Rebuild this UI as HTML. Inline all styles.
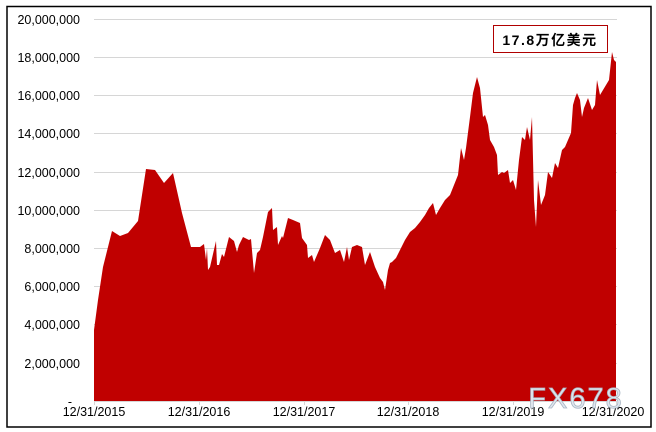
<!DOCTYPE html>
<html><head><meta charset="utf-8"><style>
html,body{margin:0;padding:0;background:#fff;}
body{width:656px;height:432px;position:relative;overflow:hidden;font-family:"Liberation Sans",Arial,sans-serif;}
</style></head><body>
<svg width="656" height="432" viewBox="0 0 656 432" xmlns="http://www.w3.org/2000/svg" style="position:absolute;left:0;top:0">
<rect x="7" y="6.5" width="644" height="420.5" fill="#fff" stroke="#000" stroke-width="1.5"/>
<g stroke="#d6d6d6" stroke-width="1">
<line x1="94" x2="617" y1="19.5" y2="19.5"/><line x1="94" x2="617" y1="57.5" y2="57.5"/>
<line x1="94" x2="617" y1="95.5" y2="95.5"/><line x1="94" x2="617" y1="133.5" y2="133.5"/>
<line x1="94" x2="617" y1="172.5" y2="172.5"/><line x1="94" x2="617" y1="210.5" y2="210.5"/>
<line x1="94" x2="617" y1="248.5" y2="248.5"/><line x1="94" x2="617" y1="286.5" y2="286.5"/>
<line x1="94" x2="617" y1="324.5" y2="324.5"/><line x1="94" x2="617" y1="363.5" y2="363.5"/>
<line x1="94" x2="617" y1="401.5" y2="401.5"/>
<line x1="94.5" x2="94.5" y1="401" y2="405"/><line x1="199.5" x2="199.5" y1="401" y2="405"/>
<line x1="304.5" x2="304.5" y1="401" y2="405"/><line x1="408.5" x2="408.5" y1="401" y2="405"/>
<line x1="513.5" x2="513.5" y1="401" y2="405"/><line x1="616.5" x2="616.5" y1="401" y2="405"/>
</g>
<path fill="#c00000" d="M94,401 L94,330 L98,300 103,267 112,231 120,236 128,233 138,221 146,169 155,170 164,183 173,173 182,213 191,247 200,247 204,244 206,260 207,248 208,270 210,267 216,241 217,265 219,265 222,254 224,257 229,237 234,241 237,252 239,245 243,237 249,240 251,239 254,273 257,253 260,250 263,237 268,212 272,208 273,230 277,227 278,245 282,236 283,238 288,218 293,220 300,223 302,238 307,245 308,258 312,255 314,262 320,248 325,235 330,240 335,253 340,250 344,262 347,247 349,260 352,247 357,245 362,247 365,265 370,252 375,267 380,278 383,282 385,290 388,270 390,263 392,262 396,258 400,250 405,240 410,232 415,228 420,222 425,215 429,208 433,203 436,215 440,208 445,200 450,195 454,185 458,175 461,148 464,160 466,148 470,117 473,93 477,77 480,88 483,117 485,115 488,125 490,140 494,147 497,155 498,175 502,172 504,173 508,170 510,183 513,180 516,190 519,160 522,137 525,140 527,127 530,140 532,117 534,200 536,227 538,180 541,205 545,195 548,172 552,178 555,163 558,168 562,150 565,147 568,140 571,133 573,105 575,98 577,93 580,100 582,117 584,108 588,98 592,110 595,105 597,80 600,95 603,90 606,85 609,80 612,52 614,60 616,62 L616,401 Z"/>
<g font-size="12.5" fill="#000" text-anchor="end" font-family="Liberation Sans,Arial,sans-serif">
<text x="80" y="24">20,000,000</text><text x="80" y="62">18,000,000</text>
<text x="80" y="100">16,000,000</text><text x="80" y="138">14,000,000</text>
<text x="80" y="177">12,000,000</text><text x="80" y="215">10,000,000</text>
<text x="80" y="253">8,000,000</text><text x="80" y="291">6,000,000</text>
<text x="80" y="329">4,000,000</text><text x="80" y="368">2,000,000</text>
<text x="72" y="406">-</text>
</g>
<g font-size="12.5" fill="#000" text-anchor="middle">
<text x="94" y="416">12/31/2015</text><text x="199" y="416">12/31/2016</text>
<text x="304" y="416">12/31/2017</text><text x="408" y="416">12/31/2018</text>
<text x="513" y="416">12/31/2019</text><text x="613" y="416">12/31/2020</text>
</g>
<rect x="493.5" y="25.5" width="114" height="27" fill="#fff" stroke="#b00000" stroke-width="1"/>
<text x="550" y="45" font-size="14" font-weight="bold" text-anchor="middle" letter-spacing="1.5" font-family="Liberation Sans,'Noto Sans CJK SC',sans-serif">17.8万亿美元</text>
<text x="576" y="408" font-size="29" text-anchor="middle" fill="#dfe6ee" stroke="#a9b6c4" stroke-width="0.8" letter-spacing="2">FX678</text>
</svg>
</body></html>
